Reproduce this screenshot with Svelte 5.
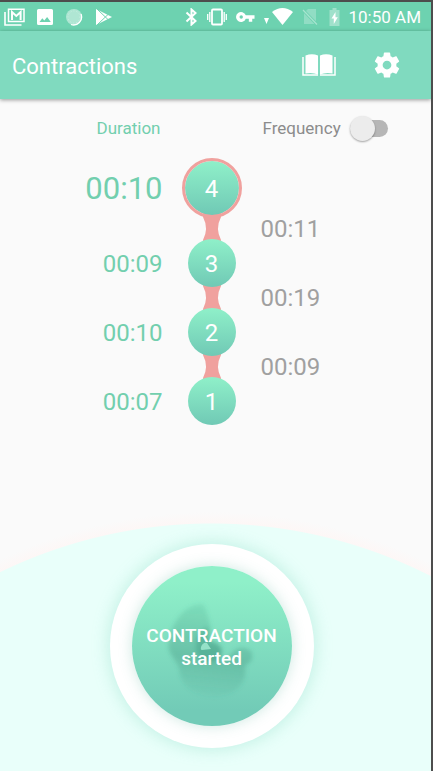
<script lang="ts">
	type Contraction = { id: number; duration: string; gap?: string };

	// Newest first; gap is the time since the previous contraction
	const contractions: Contraction[] = [
		{ id: 4, duration: '00:10', gap: '00:11' },
		{ id: 3, duration: '00:09', gap: '00:19' },
		{ id: 2, duration: '00:10', gap: '00:09' },
		{ id: 1, duration: '00:07' }
	];

	let showFrequency = $state(false);
	let running = $state(true);
</script>

<div class="screen">
	<div class="status-bar">
		<div class="status-group notifications">
			<svg width="21" height="18" viewBox="0 0 21 18" aria-hidden="true">
				<path d="M1 4v13h16.5" fill="none" stroke="#fff" stroke-width="1.6" />
				<path d="M4.500 1.200h15.500v12.300H4.500z" fill="none" stroke="#fff" stroke-width="1.500" />
				<path d="M8 12V4l4.300 4L16.600 4v8" fill="none" stroke="#fff" stroke-width="2" />
			</svg>
			<svg width="16" height="16" viewBox="0 0 16 16" aria-hidden="true">
				<path
					fill="#fff"
					fill-rule="evenodd"
					d="M1.500 0h13A1.500 1.500 0 0 1 16 1.500v13a1.500 1.500 0 0 1-1.500 1.500h-13A1.500 1.500 0 0 1 0 14.500v-13A1.500 1.500 0 0 1 1.500 0zM2.500 13h11.300l-3.700-5-2.800 3.600-2-2.300z"
				/>
			</svg>
			<svg width="18" height="18" viewBox="0 0 18 18" aria-hidden="true">
				<circle cx="9" cy="9" r="8" fill="#fff" opacity="0.45" />
				<path d="M16 6a8 8 0 0 1-10 10.500" fill="none" stroke="#fff" stroke-width="1.300" />
				<circle cx="9" cy="9" r="6" fill="none" stroke="#fff" stroke-dasharray="1 2" opacity="0.3" />
			</svg>
			<svg width="18" height="18" viewBox="0 0 18 18" aria-hidden="true">
				<path d="M1 1v16L17 9z" fill="#fff" />
				<path d="M2 1l11 10.500M2 17L13 6.500" stroke="#6dd2b0" stroke-width="1" />
			</svg>
		</div>
		<div class="status-group system">
			<svg width="13" height="18" viewBox="0 0 13 18" aria-hidden="true">
				<path
					d="M1.500 4.500l9 8.500L6.500 16.500V1.500l4 3.500-9 8.500"
					fill="none"
					stroke="#fff"
					stroke-width="2"
				/>
			</svg>
			<svg width="20" height="18" viewBox="0 0 20 18" aria-hidden="true">
				<rect x="5" y="1.500" width="10" height="15" rx="1" fill="none" stroke="#fff" stroke-width="1.800" />
				<path d="M2.800 4v10M17.200 4v10M.7 6v6M19.300 6v6" stroke="#fff" stroke-width="1.300" />
			</svg>
			<svg width="19" height="12" viewBox="0 0 20 12" aria-hidden="true">
				<path
					fill="#fff"
					fill-rule="evenodd"
					d="M10.300 4.200A5.300 5.300 0 1 0 10.300 7.800h3.200V11h3.600V7.800H19.500V4.200zM5.500 4.200a1.800 1.800 0 1 1 0 3.600a1.800 1.800 0 1 1 0-3.600z"
				/>
			</svg>
			<svg width="29" height="17" viewBox="0 0 29 17" aria-hidden="true">
				<path d="M0 10h5l-2.500 6z" fill="#fff" />
				<path d="M8 4q10.500-8 21 0L18.500 17z" fill="#fff" />
			</svg>
			<svg width="18" height="18" viewBox="0 0 18 18" aria-hidden="true">
				<path d="M6 1h8v15H2V5z" fill="#fff" opacity="0.25" />
				<path d="M1 2l14 14.500" stroke="#6dd2b0" stroke-width="3" />
				<path d="M1 2l14 14.500" stroke="#fff" stroke-width="1.200" opacity="0.4" />
			</svg>
			<svg width="11" height="18" viewBox="0 0 11 18" aria-hidden="true">
				<path d="M3.500 0h4v2h3v16H.5V2h3z" fill="#fff" opacity="0.35" />
				<path d="M6.500 4L2.500 10.500h2.300V16l4-6.800H6.500z" fill="#fff" />
			</svg>
			<span class="clock">10:50 AM</span>
		</div>
	</div>

	<header class="app-bar">
		<h1>Contractions</h1>
		<button type="button" class="icon-button" aria-label="Guide">
			<svg width="34" height="22" viewBox="0 0 34 22" aria-hidden="true">
				<path d="M3.500 1.500Q10-1 16 1.500V20.500Q10 18 3.500 19.500z" fill="#fff" />
				<path d="M18 1.500Q24-1 30.500 1.500V19.500Q24 18 18 20.500z" fill="#fff" />
				<path d="M1 3v18h15M33 3v18H18" fill="none" stroke="#fff" stroke-width="1.5" />
			</svg>
		</button>
		<button type="button" class="icon-button" aria-label="Settings">
			<svg width="30" height="30" viewBox="0 0 24 24" aria-hidden="true">
				<path
					fill="#fff"
					d="M19.430 12.980c.040-.320.070-.640.070-.980s-.030-.660-.070-.980l2.110-1.650c.190-.150.240-.420.120-.640l-2-3.460c-.120-.220-.390-.300-.610-.220l-2.490 1c-.520-.400-1.080-.730-1.690-.980l-.380-2.650C14.460 2.180 14.250 2 14 2h-4c-.250 0-.460.180-.490.420l-.380 2.650c-.610.250-1.170.590-1.690.980l-2.490-1c-.230-.090-.490 0-.610.220l-2 3.460c-.130.220-.070.490.120.640l2.110 1.650c-.040.320-.070.650-.070.980s.030.660.070.980l-2.110 1.650c-.190.150-.240.420-.120.640l2 3.460c.120.220.390.300.610.220l2.490-1c.520.400 1.080.730 1.690.980l.380 2.650c.030.240.240.420.490.420h4c.250 0 .460-.180.490-.420l.380-2.650c.610-.250 1.170-.590 1.690-.980l2.490 1c.230.090.490 0 .610-.220l2-3.460c.120-.220.070-.490-.120-.640l-2.110-1.650zM12 15.500c-1.930 0-3.500-1.570-3.500-3.500s1.570-3.500 3.500-3.500 3.500 1.570 3.500 3.500-1.570 3.500-3.500 3.500z"
				/>
			</svg>
		</button>
	</header>

	<main>
		<div class="columns labels">
			<span class="duration-label">Duration</span>
			<label class="frequency">
				<span>Frequency</span>
				<input type="checkbox" role="switch" bind:checked={showFrequency} />
			</label>
		</div>

		<div class="columns timeline">
			{#each contractions as item, i (item.id)}
				<span class="duration" class:latest={i === 0}>{item.duration}</span>
				<span class="node" class:latest={i === 0}>{item.id}</span>
				{#if item.gap}
					<svg class="link" width="18" height="31" viewBox="0 0 18 31" aria-hidden="true">
						<path d="M0 0H18V4Q12 15.500 18 27V31H0V27Q6 15.500 0 4z" fill="#f0a19e" />
					</svg>
					<span class="gap">{item.gap}</span>
				{/if}
			{/each}
		</div>
	</main>

	<section class="panel">
		<button type="button" class="record" onclick={() => (running = !running)}>
			<span class="record-face">
				<svg class="baby" viewBox="0 0 160 160" aria-hidden="true">
					<defs>
						<filter id="soft" x="-20%" y="-20%" width="140%" height="140%">
							<feGaussianBlur stdDeviation="2" />
						</filter>
						<linearGradient id="body" x1="0.6" y1="0" x2="0.5" y2="1">
							<stop offset="0" stop-color="#3f9f83" stop-opacity="0.16" />
							<stop offset="0.6" stop-color="#3f8f7a" stop-opacity="0.34" />
							<stop offset="1" stop-color="#3f8f7a" stop-opacity="0.04" />
						</linearGradient>
					</defs>
					<g filter="url(#soft)">
						<path
							d="M70 38C54 38 40 54 37 76C34 86 43 92 47 102C48 120 62 130 82 131C102 130 116 118 113 100L120 94V86C114 80 104 80 99 88C92 96 86 94 90 84C86 76 80 74 76 76C82 66 77 52 72 39z"
							fill="url(#body)"
						/>
						<path
							d="M76 61C64 66 60 82 68 92C78 100 92 94 90 83C87 76 80 77 77 74z"
							fill="#39937b"
							opacity="0.35"
						/>
					</g>
					<path d="M75 77C70 75 67 84 70 84L79 83z" fill="#a5ecd3" opacity="0.8" />
				</svg>
				<span class="record-text">CONTRACTION<br />{running ? 'started' : 'stopped'}</span>
			</span>
		</button>
	</section>
</div>

<style>
	:global(body) {
		background: #fafafa;
		font-family: Roboto, 'Liberation Sans', sans-serif;
	}

	.screen {
		display: flex;
		flex-direction: column;
		box-sizing: border-box;
		min-height: 100vh;
		border-top: 2px solid #4d4d4d;
		border-right: 2px solid #4d4d4d;
		overflow: hidden;
	}

	button {
		padding: 0;
		border: 0;
		background: none;
		font: inherit;
		color: inherit;
		cursor: pointer;
	}

	svg {
		display: block;
	}

	.status-bar {
		display: flex;
		align-items: center;
		justify-content: space-between;
		height: 29px;
		padding: 0 10px 0 4px;
		background: #6dd2b0;
		color: #fff;
	}

	.status-group {
		display: flex;
		align-items: center;
	}

	.notifications {
		gap: 12px;
	}

	.system {
		gap: 9px;
	}

	.clock {
		font-size: 17px;
		line-height: 20px;
	}

	.app-bar {
		display: flex;
		align-items: center;
		gap: 36px;
		height: 68px;
		padding: 0 29px 0 12px;
		background: #80dabf;
		box-shadow: 0 1px 4px rgba(0, 0, 0, 0.4);
		color: #fff;
	}

	h1 {
		flex: 1;
		margin: 0;
		padding-top: 4px;
		font-size: 22px;
		font-weight: 400;
		line-height: 28px;
	}

	main {
		padding: 16px 8px 0 0;
	}

	.columns {
		display: grid;
		grid-template-columns: 1fr 60px 1fr;
		column-gap: 19px;
		align-items: center;
		justify-items: center;
	}

	.labels {
		column-gap: 21px;
		height: 26px;
		font-size: 17px;
		line-height: 20px;
	}

	.duration-label {
		justify-self: end;
		color: #72cfae;
	}

	.frequency {
		display: flex;
		grid-column: 3;
		align-items: center;
		justify-self: start;
		gap: 9px;
		color: #8c8c8c;
	}

	.frequency input {
		appearance: none;
		display: flex;
		align-items: center;
		width: 38px;
		height: 17px;
		margin: 0;
		border-radius: 9px;
		background: #b6b6b6;
		cursor: pointer;
	}

	.frequency input::before {
		content: '';
		flex: none;
		width: 25px;
		height: 25px;
		border-radius: 50%;
		background: #ececec;
		box-shadow: 0 1px 2px rgba(0, 0, 0, 0.35);
	}

	.frequency input:checked {
		justify-content: flex-end;
		background: #a9e6d2;
	}

	.timeline {
		margin-top: 17px;
	}

	.duration {
		grid-column: 1;
		justify-self: end;
		padding-top: 2px;
		color: #72cfae;
		font-size: 24px;
		line-height: 28px;
	}

	.duration.latest {
		font-size: 31px;
	}

	.node {
		grid-column: 2;
		z-index: 1;
		box-sizing: border-box;
		width: 48px;
		height: 48px;
		border-radius: 50%;
		background: linear-gradient(#8ff0c9, #70c9b5) border-box;
		color: #fff;
		font-size: 24px;
		line-height: 50px;
		text-align: center;
	}

	.node.latest {
		width: 60px;
		height: 60px;
		border: 3px solid #f0a19e;
		background-clip: padding-box;
		background-origin: padding-box;
		line-height: 56px;
	}

	.link {
		grid-column: 2;
		margin: -5px 0;
	}

	.gap {
		grid-column: 3;
		justify-self: start;
		padding-top: 2px;
		color: #a0a0a0;
		font-size: 24px;
		line-height: 19px;
	}

	.panel {
		display: flex;
		flex: 1;
		justify-content: center;
		margin-top: 85px;
		padding: 34px 8px 20px 0;
		background: radial-gradient(
			circle at calc(50% - 4px) 497px,
			#e9fffa 483px,
			#fdf7f6 484px,
			#fafafa 495px
		);
	}

	.record {
		display: flex;
		align-items: center;
		justify-content: center;
		width: 204px;
		height: 204px;
		border-radius: 50%;
		background: #fff;
		box-shadow: 0 0 16px 2px rgba(140, 220, 198, 0.4);
	}

	.record-face {
		display: grid;
		place-items: center;
		width: 160px;
		height: 160px;
		border-radius: 50%;
		background: linear-gradient(#8ff0c9 10%, #72cbb7 90%);
		box-shadow: 0 0 14px rgba(90, 180, 155, 0.3);
	}

	.baby,
	.record-text {
		grid-area: 1 / 1;
	}

	.baby {
		width: 100%;
	}

	.record-text {
		z-index: 1;
		padding-top: 2px;
		color: #fff;
		font-size: 19px;
		font-weight: 500;
		line-height: 23px;
	}
</style>
